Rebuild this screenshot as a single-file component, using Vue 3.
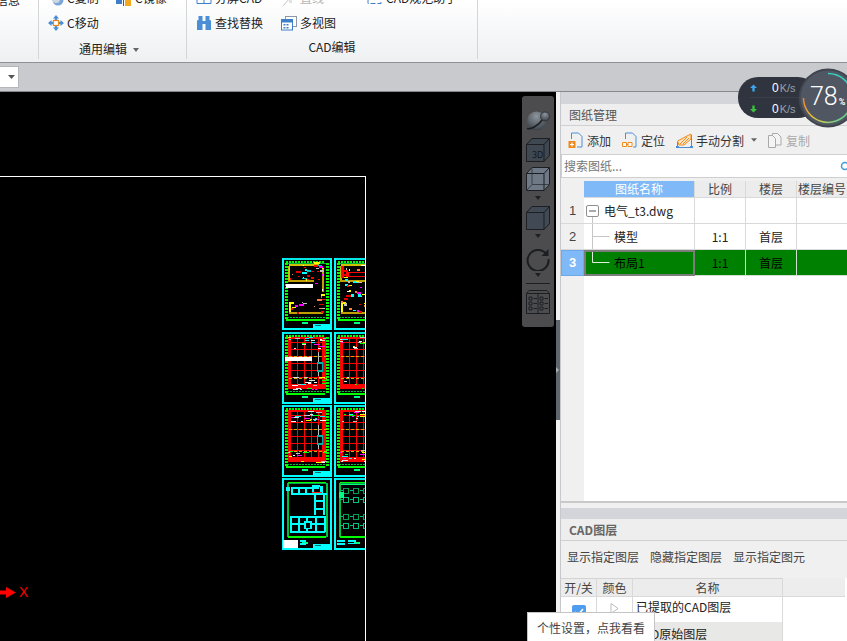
<script setup>
const ribbonRows = [
  { label: 'C复制', icon: 'copy' }, { label: 'C镜像', icon: 'mirror' }
]

function rng(seed) {
  let s = seed
  return () => {
    s = (s * 1664525 + 1013904223) % 4294967296
    return s / 4294967296
  }
}

function makeSheet(ox, oy, kind, seed) {
  const r = rng(seed)
  const out = []
  const add = (x, y, w, h, c) => out.push({ x: ox + x, y: oy + y, w, h, c })
  const pick = (a) => a[Math.floor(r() * a.length)]
  const gr = '#00ff00'
  // frame
  add(0, 0, 50, 2, '#00e8e8'); add(0, 70, 50, 2, '#00ffff')
  add(0, 0, 2, 72, '#00ffff'); add(48, 0, 2, 72, '#00ffff')
  // title block
  add(31, 66, 17, 4, '#00ffff'); add(33, 67, 6, 1, '#007070'); add(20, 64, 6, 2, '#00ff80')
  if (kind === 'walls') {
    add(6, 4, 38, 1, gr)
    add(6, 5, 38, 1, '#00a050')
    add(5, 5, 2, 54, '#00c040'); add(44, 5, 2, 54, '#00c040')
    add(6, 58, 38, 2, gr)
    if (seed % 2) {
      const c = '#00ffff'
      add(9, 9, 28, 2, c); add(9, 15, 36, 2, c); add(9, 9, 2, 7, c); add(16, 9, 2, 7, c)
      add(23, 9, 2, 7, c); add(30, 7, 2, 9, c); add(30, 7, 8, 2, c); add(38, 8, 3, 8, c)
      add(32, 15, 2, 22, c); add(41, 15, 2, 22, c); add(32, 22, 9, 2, c); add(32, 30, 9, 2, c); add(35, 24, 4, 5, '#000')
      add(8, 38, 35, 2, c); add(8, 53, 35, 2, c); add(8, 38, 2, 16, c); add(16, 38, 2, 16, c)
      add(24, 38, 2, 16, c); add(33, 38, 2, 16, c); add(42, 38, 2, 16, c); add(8, 45, 35, 2, c)
      add(22, 43, 8, 8, c); add(24, 45, 4, 5, '#000')
      add(4, 9, 4, 4, c); add(30, 14, 10, 1, '#ff2020')
      add(1, 62, 15, 8, '#ffffff')
      add(18, 62, 6, 2, '#00ffff'); add(18, 65, 6, 2, '#00ffff')
    } else {
      const c = '#00a050'
      add(7, 6, 37, 1, '#00ff80')
      for (let a = 0; a < 4; a++) for (let b = 0; b < 2; b++) {
        const bx = 9 + a * 10
        const byT = b ? 36 : 10
        add(bx, byT, 6, 6, c); add(bx + 1, byT + 1, 4, 4, '#000')
        add(bx, byT + 9, 6, 6, '#00c080'); add(bx + 1, byT + 10, 4, 4, '#000')
        add(bx - 3, byT + 2, 3, 1, '#00c080'); add(bx - 3, byT + 11, 3, 1, '#00c080')
      }
      add(5, 14, 5, 6, '#00ff80')
      add(3, 62, 8, 2, '#00ffff'); add(3, 65, 8, 2, '#00ffff'); add(14, 62, 8, 2, '#00ffff'); add(14, 65, 7, 1, '#00ffff')
    }
    return out
  }
  // green perimeter
  for (let i = 0; i < 13; i++) {
    add(4 + i * 3, 3, 2, 2, gr); add(4 + i * 3, 61, 3, 2, gr); add(5 + i * 3, 59, 2, 1, '#00c040')
  }
  add(5, 5, 39, 1, '#00b040')
  for (let i = 0; i < 19; i++) {
    add(3, 5 + i * 3, 3, 2, gr); add(44, 5 + i * 3, 3, 2, gr)
  }
  if (kind === 'grid') {
    const red = '#ff0000'
    for (let x = 8; x < 44; x += 7) add(x, 5, 1, 52, red)
    for (let y = 10; y < 56; y += 7) add(6, y, 38, 1, red)
    add(6, 5, 38, 2, red); add(6, 52, 38, 5, red)
    add(6, 5, 3, 52, red); add(40, 5, 4, 52, red)
    for (let y = 24; y < 50; y += 22) for (let x = 7; x < 44; x += 5) add(x, y, 3, 1, '#d0b000')
    for (let i = 0; i < 36; i++) {
      const top = r() < 0.5
      add(6 + r() * 36 | 0, top ? 5 + (r() * 12 | 0) : 45 + (r() * 13 | 0), 2 + (r() * 5 | 0), 1, pick(['#ffffff', '#ff00ff', '#ffff00', '#c0c0c0', '#00ffff', '#00ff00', '#e0e0e0']))
    }
    add(36, 20, 1, 24, '#c0c0c0'); add(35, 30, 6, 10, '#00b0b0'); add(36, 32, 4, 6, '#000')
    if (seed % 3 === 1) add(3, 25, 27, 4, '#ffffff')
  } else {
    add(7, 6, 30, 2, '#d0c000'); add(6, 22, 26, 2, '#c0a000'); add(32, 4, 6, 2, '#ffff00')
    add(6, 8, 2, 14, '#c0c000'); add(7, 44, 5, 2, '#ffff00'); add(7, 44, 2, 10, '#ffff00')
    add(40, 10, 2, 24, '#c0a000'); add(7, 54, 34, 2, '#c0a000')
    for (let i = 0; i < 60; i++) {
      const x = 7 + (r() * 34 | 0)
      const y = 7 + (r() * 48 | 0)
      if (seed % 3 === 0 && x < 31 && y > 23 && y < 44) continue
      add(x, y, 1 + (r() * 5 | 0), 1 + (r() * 2 | 0), pick(['#ffffff', '#ff00ff', '#ff0000', '#e00000', '#00ffff', '#c0c0c0', '#ff8040', '#00c0c0', '#ffff00']))
    }
    if (seed % 3 === 0) add(4, 26, 27, 4, '#ffffff')
    else { add(7, 8, 3, 12, '#ff0000'); add(12, 14, 24, 5, '#ff0000'); add(15, 15, 18, 3, '#000'); add(17, 36, 3, 3, '#00ffff'); add(24, 36, 3, 3, '#00ffff') }
  }
  return out
}

const sheetRects = []
const kinds = ['plan', 'grid', 'grid', 'walls']
const rowY = [1, 75, 148, 221]
const seedA = [30, 40, 38, 9]
const seedB = [31, 41, 39, 10]
kinds.forEach((k, i) => {
  sheetRects.push(...makeSheet(1, rowY[i], k, seedA[i]))
  sheetRects.push(...makeSheet(53, rowY[i], k, seedB[i]))
})

const leftTri = 'M0 0h7l-3.5 4z'
</script>

<template>
  <div class="app">
    <header class="ribbon">
      <section class="group group-a">
        <div class="cut-row"><span class="rb-text">信息</span></div>
      </section>
      <section class="group group-b">
        <div class="rows">
          <div class="rb-item">
            <svg class="ic" viewBox="0 0 16 16"><circle cx="10" cy="10" r="5.500" fill="#7aa7d8"/><circle cx="8" cy="9" r="4" fill="#cfd8e2"/></svg>
            <span class="rb-text">{{ ribbonRows[0].label }}</span>
          </div>
          <div class="rb-item">
            <svg class="ic" viewBox="0 0 16 16"><rect x="0" y="8" width="6" height="6" fill="#3f7fc9"/><rect x="7" y="6" width="1" height="10" fill="#555"/><rect x="9" y="8" width="6" height="8" fill="#f3a91f"/></svg>
            <span class="rb-text">{{ ribbonRows[1].label }}</span>
          </div>
          <div class="rb-item">
            <svg class="ic" viewBox="0 0 16 16">
              <path d="M8 0l3 3.500H9.200V6H6.800V3.500H5zM8 16l3-3.500H9.200V10H6.800v2.500H5zM0 8l3.500-3v1.800H6v2.400H3.500V11zM16 8l-3.500-3v1.800H10v2.400h2.500V11z" fill="#4a8fd6"/>
              <rect x="5.500" y="5.500" width="5" height="5" fill="#fff" stroke="#e88b1e" stroke-width="1.200"/>
            </svg>
            <span class="rb-text">C移动</span>
          </div>
        </div>
        <div class="rb-label label-low">通用编辑<i class="caret"></i></div>
      </section>
      <section class="group group-c">
        <div class="rows rows-c">
          <div class="rb-item">
            <svg class="ic" viewBox="0 0 16 16"><path d="M1 4h14v9.500H1z" fill="none" stroke="#3f7fc9"/><path d="M8 4v9.500" stroke="#3f7fc9"/></svg>
            <span class="rb-text">分屏CAD</span>
          </div>
          <div class="rb-item">
            <svg class="ic" viewBox="0 0 16 16"><path d="M2 16l7-8" stroke="#c4c4c4" fill="none"/><rect x="8" y="10" width="3" height="3" fill="#e2e2e2"/></svg>
            <span class="rb-text off">直线</span>
          </div>
          <div class="rb-item">
            <svg class="ic" viewBox="0 0 16 16"><path d="M1 4h13v9.500H1z" fill="none" stroke="#3f7fc9" stroke-dasharray="5 2"/></svg>
            <span class="rb-text">CAD规范助手</span>
          </div>
          <div class="rb-item">
            <svg class="ic" viewBox="0 0 16 16">
              <path d="M1 15V5.500L2.500 5V1h4v5h3V1h4v4L15 5.500V15H9.500V9h-3v6z" fill="#4a8fd6"/>
            </svg>
            <span class="rb-text">查找替换</span>
          </div>
          <div class="rb-item">
            <svg class="ic" viewBox="0 0 16 16">
              <rect x="4.500" y="1.500" width="11" height="10" fill="#fff" stroke="#8a97a8"/>
              <rect x="0.500" y="4.500" width="11" height="10.500" fill="#fff" stroke="#3f7fc9"/>
              <rect x="1" y="5" width="10" height="2.500" fill="#3f7fc9"/>
              <path d="M2.500 9h2v1.500h-2zM5.500 9h2v1.500h-2zM2.500 12h2v1.500h-2zM5.500 12h2v1.500h-2z" fill="#3f7fc9"/>
            </svg>
            <span class="rb-text">多视图</span>
          </div>
        </div>
        <div class="rb-label">CAD编辑</div>
      </section>
      <section class="group group-d"></section>
    </header>

    <div class="strip">
      <div class="combo">
        <svg width="7" height="4" viewBox="0 0 7 4"><path :d="leftTri" fill="#555"/></svg>
      </div>
    </div>

    <main class="main">
      <div class="canvas">
        <div class="paper"></div>
        <svg class="sheets" width="84" height="294" viewBox="0 0 84 294" shape-rendering="crispEdges">
          <rect v-for="(s, i) in sheetRects" :key="i" :x="s.x" :y="s.y" :width="s.w" :height="s.h" :fill="s.c"/>
        </svg>
        <div class="axis">
          <svg width="17" height="11" viewBox="0 0 17 11"><path d="M0 3.500h6V0l10 5.500L6 11V7.500H0z" fill="#ff0000"/></svg>
          <span>X</span>
        </div>

        <div class="cube-bar">
          <svg class="c-ic sphere" viewBox="0 0 24 21" width="24" height="21">
            <defs>
              <radialGradient id="sp" cx="50%" cy="25%" r="80%"><stop offset="0" stop-color="#8e959d"/><stop offset="1" stop-color="#363c44"/></radialGradient>
            </defs>
            <circle cx="10.500" cy="11" r="9.500" fill="url(#sp)"/>
            <path d="M1 18.500c3 1 11-2 16-9.500" fill="none" stroke="#1b1e22" stroke-width="1.600"/>
            <circle cx="19" cy="6.500" r="4.500" fill="url(#sp)" stroke="#2c3036" stroke-width=".8"/>
          </svg>
          <svg class="c-ic m-7" viewBox="0 0 24 24" width="24" height="24">
            <path d="M.5 6.500L6 .5h17.500v17L18 23.500H.5z" fill="#3f4751" stroke="#1b1e22"/>
            <path d="M.5 6.500H18v17M18 6.500L23.500 .5" fill="none" stroke="#1b1e22"/>
            <text x="6" y="20" class="c3d">3D</text>
          </svg>
          <svg class="c-ic m-5" viewBox="0 0 24 24" width="24" height="24">
            <path d="M.5 6.500L6 .5h17.500v17L18 23.500H.5z" fill="#6f7985" stroke="#1b1e22"/>
            <path d="M6 .5V17.500H23.500M6 17.500L.5 23.500" fill="none" stroke="#3a4047"/>
            <path d="M.5 6.500H18v17M18 6.500L23.500 .5" fill="none" stroke="#1b1e22"/>
          </svg>
          <i class="tri t-1"></i>
          <svg class="c-ic" viewBox="0 0 24 24" width="24" height="24">
            <path d="M.5 6.500L6 .5h17.500v17L18 23.500H.5z" fill="#414a54" stroke="#1b1e22"/>
            <path d="M.5 6.500H18v17M18 6.500L23.500 .5" fill="none" stroke="#1b1e22"/>
          </svg>
          <i class="tri t-2"></i>
          <svg class="c-ic" viewBox="0 0 24 24" width="24" height="24">
            <path d="M20 6.500A10.500 10.500 0 1 0 22.500 12" fill="none" stroke="#1b1e22" stroke-width="2"/>
            <path d="M22.500 2v7h-7z" fill="#1b1e22"/>
          </svg>
          <i class="tri t-3"></i>
          <i class="bar-line"></i>
          <svg class="c-ic" viewBox="0 0 24 24" width="24" height="24" fill="none" stroke="#1b1e22">
            <path d="M3 .5h18l2.500 3v20H.5v-20zM.5 3.500h23M12 3.500v20"/>
            <path d="M3 7h3v3H3zM3 12h3v3H3zM3 17h3v3H3zM14 7h3v3h-3zM14 12h3v3h-3zM14 17h3v3h-3zM7.500 8.500H11M7.500 13.500H11M7.500 18.500H11M18.500 8.500H22M18.500 13.500H22M18.500 18.500H22"/>
          </svg>
        </div>
      </div>

      <div class="splitter">
        <div class="handle"><i></i></div>
      </div>

      <aside class="side">
        <div class="band"></div>
        <div class="panel-title">图纸管理</div>
        <div class="tools">
          <span class="tool">
            <svg class="ic" viewBox="0 0 16 16">
              <path d="M3.500 7V1h7l3.500 3.500V15H9" fill="none" stroke="#4a8fd6"/>
              <rect x="0.500" y="9" width="7" height="7" fill="#ef8a1c"/>
              <path d="M4 10.500v4M2 12.500h4" stroke="#fff" stroke-width="1.200"/>
            </svg>添加
          </span>
          <span class="tool">
            <svg class="ic" viewBox="0 0 16 16">
              <path d="M3.500 7V1h7l3.500 3.500V15H11" fill="none" stroke="#4a8fd6"/>
              <path d="M.5 10.500h4v4h-4zM6 10.500h4v4H6z" fill="#fff" stroke="#ef8a1c"/>
              <path d="M4.500 12.500H6" stroke="#ef8a1c"/>
            </svg>定位
          </span>
          <span class="tool t-split">
            <svg class="ic wide" viewBox="0 0 17 16">
              <path d="M1 15.500h15M1.500 15V10M15.500 15V3" stroke="#4a8fd6" fill="none"/>
              <path d="M1.500 9L9 5l6-3v5L8 13H3z" fill="#fbe3c4" stroke="#ef8a1c"/>
              <path d="M4 12l7-7M7 12l6-6" stroke="#ef8a1c" fill="none"/>
              <rect x="0" y="14" width="3" height="2" fill="#4a8fd6"/><rect x="14" y="14" width="3" height="2" fill="#4a8fd6"/>
            </svg>手动分割
            <svg class="mini" width="6" height="4" viewBox="0 0 7 4"><path :d="leftTri" fill="#666"/></svg>
          </span>
          <span class="tool dim">
            <svg class="ic" viewBox="0 0 16 16" fill="#f4f4f4" stroke="#aaa">
              <path d="M5.500 1.500h5l3.500 3.500v8H5.500z"/>
              <path d="M1.500 3.500h4l3 3v9h-7z"/>
            </svg>复制
          </span>
        </div>
        <div class="search">
          <span>搜索图纸...</span>
          <svg class="lens" width="10" height="10" viewBox="0 0 10 10"><circle cx="5" cy="5" r="3.500" fill="none" stroke="#3d9be0" stroke-width="1.500"/></svg>
        </div>

        <div class="sheet-area">
          <div class="grid g-head">
            <div class="gutter"></div>
            <div class="th active">图纸名称</div>
            <div class="th">比例</div>
            <div class="th">楼层</div>
            <div class="th">楼层编号</div>
          </div>
          <div class="grid g-row">
            <div class="rh">1</div>
            <div class="td name">
              <svg class="tree" width="43" height="25" viewBox="0 0 43 25">
                <rect x="2.500" y="7.500" width="12" height="11" rx="1.500" fill="#fff" stroke="#8f8f8f"/>
                <path d="M5 13h7" stroke="#555"/>
                <path d="M8.500 19v6" stroke="#c6c6c6"/>
              </svg>
              <span class="fname">电气_t3.dwg</span>
            </div>
            <div class="td"></div><div class="td"></div><div class="td"></div>
          </div>
          <div class="grid g-row">
            <div class="rh">2</div>
            <div class="td name">
              <svg class="tree" width="30" height="25" viewBox="0 0 30 25">
                <path d="M8.500 0v25M8.500 12.500h17" stroke="#c6c6c6" fill="none"/>
              </svg>
              <span>模型</span>
            </div>
            <div class="td">1:1</div><div class="td">首层</div><div class="td"></div>
          </div>
          <div class="grid g-row sel">
            <div class="rh on">3</div>
            <div class="td name focus">
              <svg class="tree" width="28" height="22" viewBox="0 0 28 22">
                <path d="M6.500 0v10.500h17" stroke="#dfeedd" fill="none"/>
              </svg>
              <span>布局1</span>
            </div>
            <div class="td">1:1</div><div class="td">首层</div><div class="td"></div>
          </div>
          <div class="fill"><div class="gutter-fill"></div></div>
        </div>

        <div class="gap"></div>
        <div class="band band-2"></div>
        <div class="panel-title bold">CAD图层</div>
        <div class="layer-actions">
          <span>显示指定图层</span><span>隐藏指定图层</span><span>显示指定图元</span>
        </div>
        <div class="layers">
          <div class="lg lg-head">
            <div class="lh">开/关</div><div class="lh">颜色</div><div class="lh">名称</div><div class="lh blank"></div>
          </div>
          <div class="lg lg-row first">
            <div class="lc center"><i class="check"><svg width="10" height="8" viewBox="0 0 10 8"><path d="M1 4l3 3 5-6" fill="none" stroke="#fff" stroke-width="1.500"/></svg></i></div>
            <div class="lc center"><svg width="9" height="11" viewBox="0 0 9 11"><path d="M1 .5l7 5-7 5z" fill="#fff" stroke="#bbb"/></svg></div>
            <div class="lc text">已提取的CAD图层</div>
          </div>
          <div class="lg lg-row alt">
            <div class="lc"></div><div class="lc"></div>
            <div class="lc text">CAD原始图层</div>
          </div>
        </div>
      </aside>
    </main>

    <div class="tip">个性设置，点我看看</div>

    <div class="speed">
      <div class="pill">
        <div class="p-row">
          <svg width="7" height="8" viewBox="0 0 9 9"><path d="M4.500 0L9 4.500H6V9H3V4.500H0z" fill="#3aa6f0"/></svg>
          <b>0</b><em>K/s</em>
        </div>
        <div class="p-row">
          <svg width="7" height="8" viewBox="0 0 9 9"><path d="M4.500 9L0 4.500h3V0h3v4.500h3z" fill="#3cc23c"/></svg>
          <b>0</b><em>K/s</em>
        </div>
      </div>
      <div class="dial">
        <svg width="60" height="60" viewBox="0 0 60 60">
          <defs>
            <linearGradient id="arc" x1="0" y1="0" x2="1" y2="0.400">
              <stop offset="0" stop-color="#ee7f2d"/><stop offset="0.45" stop-color="#f0c93a"/><stop offset="1" stop-color="#6fd08a"/>
            </linearGradient>
          </defs>
          <circle cx="30" cy="30" r="29.500" fill="#3f444e"/>
          <circle cx="30" cy="30" r="27.500" fill="#505662"/>
          <path d="M30 5.500A24.500 24.500 0 0 1 54.300 27" fill="none" stroke="#35d0c0" stroke-width="1.500"/>
          <path d="M5.500 30A24.500 24.500 0 0 0 50 44" fill="none" stroke="url(#arc)" stroke-width="1.500"/>
        </svg>
        <div class="dial-text"><span class="num">78</span><span class="pct">%</span></div>
      </div>
    </div>
  </div>
</template>

<style>
html, body { margin: 0; background: #000; overflow: hidden; }
</style>

<style scoped>
.app {
  position: relative;
  width: 847px;
  height: 641px;
  overflow: hidden;
  display: flex;
  flex-direction: column;
  font-family: "Noto Sans CJK SC", "Liberation Sans", sans-serif;
  font-size: 12px;
  color: #222;
  background: #000;
}
.ribbon {
  flex: none;
  height: 62px;
  display: flex;
  align-items: flex-start;
  overflow: hidden;
  background: linear-gradient(#ffffff, #eef0f2);
  border-bottom: 1px solid #8e9297;
}
.group {
  flex: none;
  height: 59px;
  box-sizing: border-box;
  display: flex;
  flex-direction: column;
  justify-content: flex-end;
  border-right: 1px solid #d3d5d8;
}
.group-a { width: 39px; justify-content: flex-start; }
.cut-row { margin-top: -9px; height: 20px; line-height: 17px; margin-left: -4px; white-space: nowrap; }
.group-b { width: 148px; padding-left: 9px; }
.group-c { width: 291px; padding-left: 9px; }
.group-d { flex: 1; border-right: 0; }
.rows {
  display: grid;
  grid-template-columns: 68px 68px;
  grid-auto-rows: 25px;
  align-items: center;
}
.rows-c { grid-template-columns: 85px 86px 100px; }
.rb-item { display: flex; align-items: center; gap: 3px; white-space: nowrap; }
.rb-text { line-height: 16px; }
.off { color: #b5b5b5; }
.ic { width: 16px; height: 16px; flex: none; }
.rb-label {
  height: 24px;
  line-height: 24px;
  margin-left: -9px;
  text-align: center;
  color: #222;
}
.label-low { line-height: 28px; padding-right: 7px; }
.caret {
  display: inline-block;
  margin-left: 6px;
  vertical-align: 2px;
  border-left: 3.500px solid transparent;
  border-right: 3.500px solid transparent;
  border-top: 4px solid #666;
}
.strip {
  flex: none;
  height: 29px;
  box-sizing: border-box;
  padding-top: 3px;
  background: #c8cacd;
  border-bottom: 1px solid #85888c;
}
.combo {
  width: 19px;
  height: 22px;
  box-sizing: border-box;
  background: #fff;
  border: 1px solid #b4b6b9;
  border-left: 0;
  display: flex;
  align-items: center;
  justify-content: flex-end;
  padding-right: 3px;
}
.main { flex: 1; display: flex; min-height: 0; }
.canvas { position: relative; flex: none; width: 556px; background: #000; overflow: hidden; }
.paper {
  position: absolute;
  left: -2px;
  top: 84px;
  width: 366px;
  height: 600px;
  border: 1px solid #fff;
  box-sizing: content-box;
}
.sheets { position: absolute; left: 281px; top: 165px; }
.axis {
  position: absolute;
  left: 0;
  top: 493px;
  display: flex;
  align-items: center;
  gap: 2px;
  color: #ff0000;
  font-family: "Liberation Sans", sans-serif;
  font-size: 14px;
  line-height: 14px;
}
.cube-bar {
  position: absolute;
  left: 522px;
  top: 4px;
  width: 32px;
  height: 231px;
  box-sizing: border-box;
  background: #4c4c4e;
  border-radius: 3px;
  display: flex;
  flex-direction: column;
  align-items: center;
  padding-top: 14px;
}
.c-ic { flex: none; display: block; }
.m-7 { margin-top: 7px; }
.m-5 { margin-top: 5px; }
.c3d { font: 8px "DejaVu Sans", sans-serif; fill: #15181c; }
.tri {
  display: block;
  flex: none;
  border-left: 3.500px solid transparent;
  border-right: 3.500px solid transparent;
  border-top: 4px solid #1d1f22;
}
.t-1 { margin: 5px 0 6px; }
.t-2 { margin: 4px 0 9px; }
.t-3 { margin: 2px 0 6px; }
.bar-line { display: block; flex: none; width: 24px; height: 1px; background: #1b1e22; margin: 0 0 6px; }
.splitter { flex: none; width: 4px; background: #f2f2f2; position: relative; }
.handle {
  position: absolute;
  left: 0;
  top: 228px;
  width: 4px;
  height: 100px;
  background: #5f666e;
  display: flex;
  align-items: center;
}
.handle i {
  display: block;
  border-left: 3px solid #a8adb2;
  border-top: 3px solid transparent;
  border-bottom: 3px solid transparent;
}
.side {
  flex: 1;
  min-width: 0;
  display: flex;
  flex-direction: column;
  background: #f0f0f0;
  border-left: 1px solid #c6c8cb;
  overflow: hidden;
}
.band { flex: none; height: 12px; background: #d3d5da; }
.panel-title {
  flex: none;
  height: 21px;
  line-height: 21px;
  padding-left: 8px;
  background: #eeeeee;
  color: #555;
  border-bottom: 1px solid #d0d0d0;
}
.bold { font-weight: 700; color: #666; }
.tools {
  flex: none;
  height: 28px;
  display: flex;
  align-items: center;
  padding-left: 7px;
  white-space: nowrap;
  color: #333;
}
.tool { display: inline-flex; align-items: center; gap: 3px; margin-right: 11px; }
.t-split { margin-right: 10px; }
.wide { width: 17px; }
.mini { margin-left: 4px; }
.dim { color: #aaa; }
.search {
  flex: none;
  height: 24px;
  box-sizing: border-box;
  background: #fff;
  border: 1px solid #cfcfcf;
  line-height: 22px;
  padding-left: 2px;
  color: #777;
  position: relative;
  width: 288px;
}
.lens { position: absolute; right: -2px; top: 6px; }
.sheet-area {
  flex: none;
  height: 322px;
  box-sizing: border-box;
  margin-top: 3px;
  background: #fff;
  border-bottom: 2px solid #c9c9c9;
  display: flex;
  flex-direction: column;
}
.grid { display: grid; grid-template-columns: 23px 111px 51px 51px 51px; flex: none; }
.g-head { height: 17px; }
.gutter { background: #f0f0f0; }
.th {
  background: #ececec;
  border-right: 1px solid #d9d9d9;
  border-bottom: 1px solid #d9d9d9;
  text-align: center;
  line-height: 16px;
  color: #444;
  white-space: nowrap;
}
.th.active { background: #7fb9f7; color: #fff; }
.g-row { height: 26px; }
.rh {
  background: #f0f0f0;
  border-bottom: 1px solid #d9d9d9;
  text-align: center;
  line-height: 25px;
  color: #444;
  font-family: "Liberation Sans", sans-serif;
  font-size: 13px;
}
.rh.on { background: #7fb9f7; color: #fff; font-weight: 700; border: 1px solid #6ea8ea; line-height: 23px; }
.td {
  box-sizing: border-box;
  border-right: 1px solid #d9d9d9;
  border-bottom: 1px solid #d9d9d9;
  text-align: center;
  line-height: 25px;
  color: #222;
  background: #fff;
}
.name { display: flex; align-items: center; text-align: left; }
.tree { flex: none; display: block; }
.fname { margin-left: -23px; }
.sel .td { background: #008000; border-color: #cfe0cf; color: #000; }
.sel .focus { border: 2px solid #7c7c7c; line-height: 22px; }
.fill { flex: 1; display: flex; }
.gutter-fill { width: 23px; background: #f0f0f0; }
.gap { flex: none; height: 5px; }
.band-2 { height: 11px; }
.layer-actions {
  flex: none;
  height: 30px;
  display: flex;
  align-items: center;
  gap: 11px;
  padding-left: 6px;
  color: #444;
  white-space: nowrap;
}
.layers { flex: 1; margin-top: 7px; background: #fff; overflow: hidden; }
.lg { display: grid; grid-template-columns: 36px 36px 150px 62px; }
.lg-head { height: 19px; }
.lh {
  background: #ececec;
  border-right: 1px solid #d9d9d9;
  border-top: 1px solid #d3d3d3;
  border-bottom: 1px solid #d9d9d9;
  box-sizing: border-box;
  text-align: center;
  line-height: 17px;
  color: #444;
  white-space: nowrap;
}
.lh.blank { border-right: 0; border-top: 0; background: #ededed; }
.lg-row { height: 25px; }
.lc {
  box-sizing: border-box;
  border-right: 1px solid #d9d9d9;
  border-bottom: 1px solid #d9d9d9;
  background: #fff;
}
.center { display: flex; align-items: center; justify-content: center; }
.first .center { padding-bottom: 4px; }
.text { line-height: 24px; padding-left: 3px; color: #222; white-space: nowrap; }
.first .text { line-height: 20px; }
.alt .lc { background: #e8e8e6; }
.check {
  display: flex;
  align-items: center;
  justify-content: center;
  width: 14px;
  height: 14px;
  background: #4e9df0;
  border-radius: 2px;
  margin-top: 8px;
}
.tip {
  position: absolute;
  left: 527px;
  top: 612px;
  width: 128px;
  height: 40px;
  box-sizing: border-box;
  background: #fff;
  border: 1px solid #c4c4c4;
  padding: 6px 0 0 9px;
  line-height: 17px;
  color: #444;
  white-space: nowrap;
}
.speed { position: absolute; left: 738px; top: 68px; width: 120px; height: 60px; }
.pill {
  position: absolute;
  left: 0;
  top: 9px;
  width: 80px;
  height: 41px;
  box-sizing: border-box;
  border-radius: 20px;
  background: #2f343f;
  padding-left: 12px;
  display: flex;
  flex-direction: column;
}
.p-row { flex: 1; display: flex; align-items: center; color: #fff; padding-top: 1px; }
.p-row + .p-row { border-top: 1px solid #3a3f4a; }
.p-row svg { flex: none; margin-right: 15px; }
.p-row b { font: 400 12px "Liberation Sans", sans-serif; color: #fff; }
.p-row em { font: 400 11px "Liberation Sans", sans-serif; color: #9ba0a9; margin-left: 1px; }
.dial { position: absolute; left: 60px; top: 0; width: 60px; height: 60px; }
.dial svg { display: block; }
.dial-text {
  position: absolute;
  left: 12px;
  top: 13px;
  display: flex;
  align-items: baseline;
  color: #fff;
  font-family: Roboto, "Liberation Sans", sans-serif;
  line-height: 32px;
  white-space: nowrap;
}
.num { font-size: 25px; font-weight: 300; }
.pct { font-size: 9px; margin-left: 1px; font-weight: 700; }
</style>
